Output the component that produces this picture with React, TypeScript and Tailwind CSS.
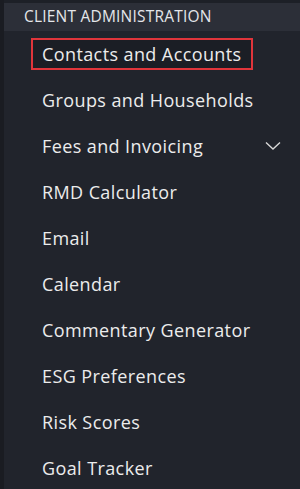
const items = [
  "Contacts and Accounts",
  "Groups and Households",
  "Fees and Invoicing",
  "RMD Calculator",
  "Email",
  "Calendar",
  "Commentary Generator",
  "ESG Preferences",
  "Risk Scores",
  "Goal Tracker",
];

export default function App() {
  return (
    <div
      className="w-[300px] h-[489px] overflow-hidden bg-[#1d2027] flex"
      style={{ fontFamily: '"Open Sans", "Liberation Sans", sans-serif' }}
    >
      <div className="w-[4px] shrink-0 bg-[#1a1c22]" />
      <div className="flex-1 flex flex-col pt-[3px]">
        <div className="h-[28px] shrink-0 bg-[#2c2f38] flex items-center pl-[20px] text-[15.5px] text-[#e4e6ea] tracking-[0.2px]">
          CLIENT ADMINISTRATION
        </div>
        <nav className="flex-1 bg-[#21242c]">
          {items.map((label, i) => (
            <div key={label} className="h-[46px] flex items-center pl-[27px] pr-[18px]">
              {i === 0 ? (
                <div className="h-[32px] w-[222px] border-2 border-[#e0353b] bg-[#1b1e25] flex items-center pl-[9px] text-[18px] tracking-[0.4px] text-[#ececec]">
                  {label}
                </div>
              ) : (
                <div className="flex-1 flex items-center justify-between pl-[11px] text-[18px] tracking-[0.4px] text-[#ececec]">
                  <span>{label}</span>
                  {label === "Fees and Invoicing" && (
                    <svg width="16" height="10" viewBox="0 0 16 10" className="mr-[1px]">
                      <path d="M1 1.5 L8 8 L15 1.5" fill="none" stroke="#d8d8d8" strokeWidth="1.4" />
                    </svg>
                  )}
                </div>
              )}
            </div>
          ))}
        </nav>
      </div>
    </div>
  );
}
